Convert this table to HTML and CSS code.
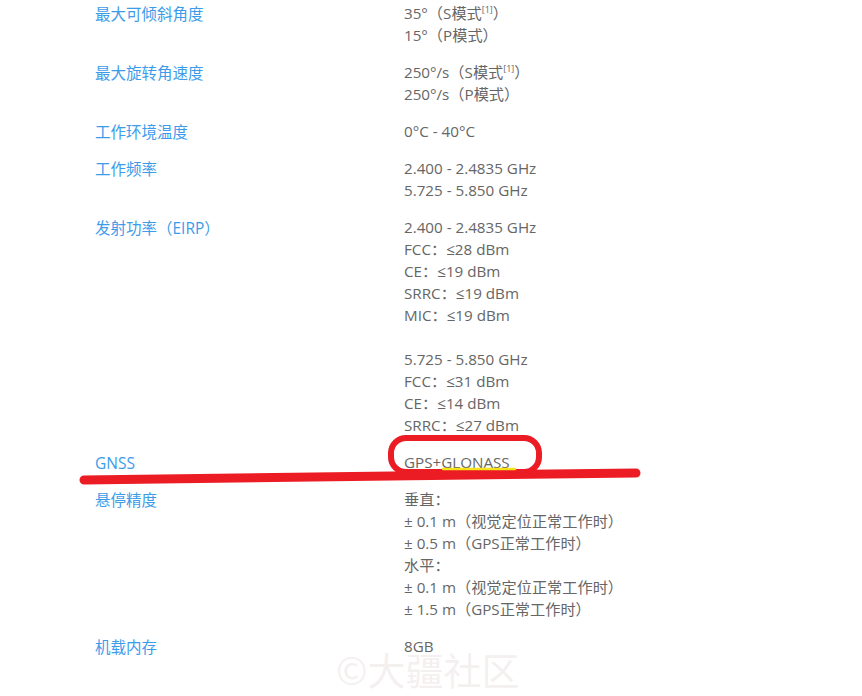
FILE: index.html
```html
<!DOCTYPE html>
<html lang="zh-CN">
<head>
<meta charset="utf-8">
<title>规格参数</title>
<link rel="stylesheet" href="styles.css">
</head>
<body>
<div class="page">
  <div class="specs">
    <div class="row">
      <div class="label">最大可倾斜角度</div>
      <div class="value">35°（S模式<sup>[1]</sup>）<br>15°（P模式）</div>
    </div>
    <div class="row">
      <div class="label">最大旋转角速度</div>
      <div class="value">250°/s（S模式<sup>[1]</sup>）<br>250°/s（P模式）</div>
    </div>
    <div class="row">
      <div class="label">工作环境温度</div>
      <div class="value">0°C - 40°C</div>
    </div>
    <div class="row">
      <div class="label">工作频率</div>
      <div class="value">2.400 - 2.4835 GHz<br>5.725 - 5.850 GHz</div>
    </div>
    <div class="row">
      <div class="label">发射功率（EIRP）</div>
      <div class="value">2.400 - 2.4835 GHz<br>FCC：≤28 dBm<br>CE：≤19 dBm<br>SRRC：≤19 dBm<br>MIC：≤19 dBm<br><br>5.725 - 5.850 GHz<br>FCC：≤31 dBm<br>CE：≤14 dBm<br>SRRC：≤27 dBm</div>
    </div>
    <div class="row">
      <div class="label">GNSS</div>
      <div class="value">GPS+GLONASS</div>
    </div>
    <div class="row">
      <div class="label">悬停精度</div>
      <div class="value">垂直：<br>± 0.1 m（视觉定位正常工作时）<br>± 0.5 m（GPS正常工作时）<br>水平：<br>± 0.1 m（视觉定位正常工作时）<br>± 1.5 m（GPS正常工作时）</div>
    </div>
    <div class="row">
      <div class="label">机载内存</div>
      <div class="value">8GB</div>
    </div>
  </div>

  <svg class="marks" width="862" height="696" viewBox="0 0 862 696" aria-hidden="true">
    <rect x="391" y="438" width="148" height="34" rx="15" ry="15" fill="none" stroke="#ec1c24" stroke-width="6"/>
    <path d="M84 480 C 250 478, 420 476, 636 473" fill="none" stroke="#ec1c24" stroke-width="9" stroke-linecap="round"/>
    <path d="M443 469 L515 469" fill="none" stroke="#f4e21a" stroke-width="2.4" stroke-linecap="round"/>
  </svg>

  <div class="watermark">©大疆社区</div>
</div>
</body>
</html>
```

FILE: styles.css
```css
html, body {
  margin: 0;
  padding: 0;
  background: #ffffff;
}

.page {
  position: relative;
  width: 862px;
  height: 696px;
  overflow: hidden;
  font-family: "Open Sans", "Noto Sans CJK SC", sans-serif;
  font-size: 15.5px;
  line-height: 22px;
}

.specs {
  padding: 3px 0 0 95px;
}

.row {
  display: grid;
  grid-template-columns: 309px 1fr;
  padding-bottom: 15px;
}

.label {
  color: #3d9cea;
}

.value {
  color: #666666;
  font-size: 15.2px;
  margin-top: -1px;
  margin-bottom: 1px;
}

.value sup {
  font-size: 9px;
  line-height: 0;
  vertical-align: 6px;
}

.marks {
  position: absolute;
  left: 0;
  top: 0;
  pointer-events: none;
}

.watermark {
  position: absolute;
  left: 336px;
  top: 645px;
  font-family: "Noto Sans CJK SC", sans-serif;
  font-size: 38px;
  line-height: 48px;
  color: rgba(225, 212, 212, 0.35);
  pointer-events: none;
}
```
